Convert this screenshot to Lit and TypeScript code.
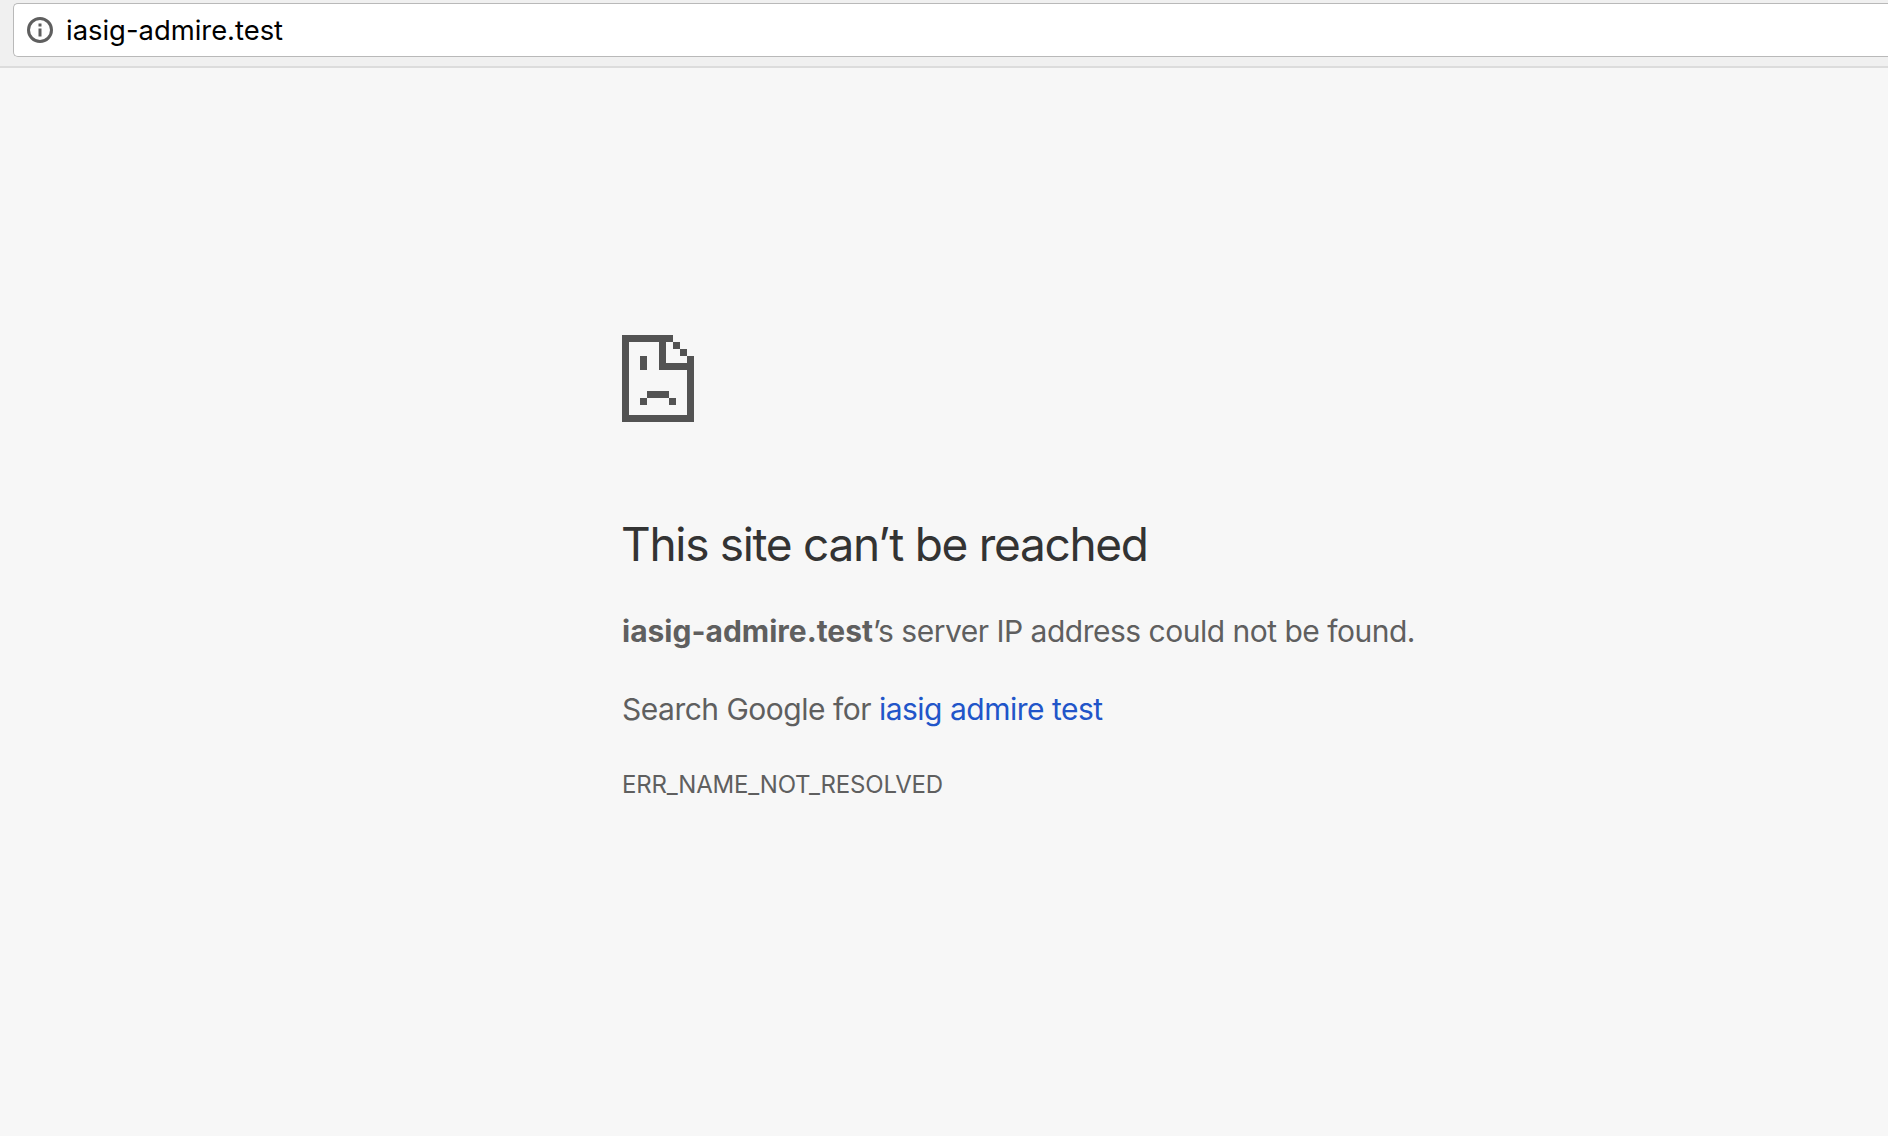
import { LitElement, html, css } from "lit";
import { customElement } from "lit/decorators.js";

@customElement("app-root")
export class AppRoot extends LitElement {
  static styles = css`
    :host {
      display: block;
      min-height: 100vh;
      background: #f7f7f7;
      font-family: Inter, "Liberation Sans", sans-serif;
      color: #5f5f5f;
    }
    .toolbar {
      box-sizing: border-box;
      height: 68px;
      padding: 3px 0 10px 13px;
      background: #f0f0f0;
      border-bottom: 2px solid #dcdcdc;
    }
    .omnibox {
      box-sizing: border-box;
      height: 54px;
      display: flex;
      align-items: center;
      gap: 12px;
      padding-left: 12px;
      background: #fff;
      border: 1px solid #b9b9b9;
      border-right: none;
      border-radius: 5px 0 0 5px;
      color: #000;
      font-size: 27.4px;
    }
    .omnibox svg {
      width: 28px;
      height: 28px;
    }
    .content {
      padding: 267px 0 0 622px;
    }
    .sad-page {
      display: block;
      width: 72px;
      height: 87px;
      fill: #535353;
      shape-rendering: crispEdges;
    }
    h1 {
      margin: 92px 0 0 -1px;
      font-size: 46px;
      line-height: 60px;
      font-weight: 400;
      letter-spacing: -1.3px;
      color: #333;
    }
    p {
      margin: 0;
      font-size: 30px;
      line-height: 40px;
      letter-spacing: -0.5px;
      white-space: nowrap;
    }
    strong {
      letter-spacing: 0;
    }
    .summary {
      margin-top: 37px;
    }
    .search {
      margin-top: 38px;
    }
    a {
      color: #2155c9;
      text-decoration: none;
    }
    .code {
      margin-top: 40px;
      font-size: 24px;
      line-height: 32px;
      letter-spacing: -0.2px;
    }
  `;

  render() {
    return html`
      <div class="toolbar">
        <div class="omnibox">
          <svg viewBox="0 0 28 28" fill="none">
            <circle cx="14" cy="14" r="11.5" stroke="#5f5f5f" stroke-width="3"></circle>
            <rect x="12.5" y="12.5" width="3" height="8" fill="#5f5f5f"></rect>
            <rect x="12.5" y="7.5" width="3" height="3" fill="#5f5f5f"></rect>
          </svg>
          <span>iasig-admire.test</span>
        </div>
      </div>
      <div class="content">
        <svg class="sad-page" viewBox="0 0 216 262">
          <rect x="0" y="0" width="21" height="262"></rect>
          <rect x="0" y="0" width="153" height="21"></rect>
          <rect x="153" y="21" width="21" height="21"></rect>
          <rect x="174" y="42" width="21" height="21"></rect>
          <rect x="195" y="63" width="21" height="199"></rect>
          <rect x="0" y="241" width="216" height="21"></rect>
          <rect x="111" y="21" width="21" height="84"></rect>
          <rect x="111" y="84" width="84" height="21"></rect>
          <rect x="54" y="63" width="21" height="42"></rect>
          <rect x="75" y="168" width="66" height="21"></rect>
          <rect x="54" y="189" width="21" height="21"></rect>
          <rect x="141" y="189" width="21" height="21"></rect>
        </svg>
        <h1>This site can’t be reached</h1>
        <p class="summary"><strong>iasig-admire.test</strong>’s server IP address could not be found.</p>
        <p class="search">Search Google for <a href="#">iasig admire test</a></p>
        <p class="code">ERR_NAME_NOT_RESOLVED</p>
      </div>
    `;
  }
}
